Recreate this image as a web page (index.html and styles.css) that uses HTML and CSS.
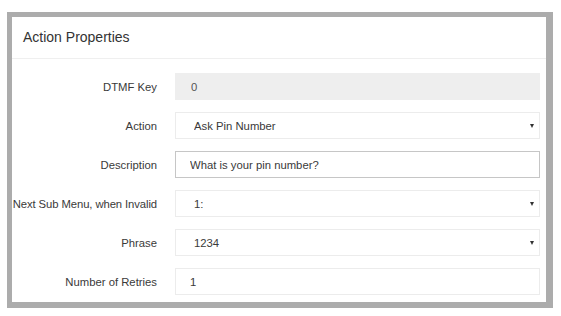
FILE: index.html
```html
<!DOCTYPE html>
<html lang="en">
<head>
    <meta charset="UTF-8">
    <meta name="viewport" content="width=device-width, initial-scale=1.0">
    <title>Action Properties</title>
    <link rel="stylesheet" href="styles.css">
</head>
<body>

<div class="panel">
    <div class="panel-heading">Action Properties</div>

    <form class="panel-body">
        <label for="dtmf-key">DTMF Key</label>
        <input type="text" id="dtmf-key" class="field field-disabled" value="0" disabled>

        <label for="action">Action</label>
        <span class="select-wrap">
            <select id="action" class="field">
                <option>Ask Pin Number</option>
                <option>Play Message</option>
                <option>Transfer</option>
            </select>
        </span>

        <label for="description">Description</label>
        <input type="text" id="description" class="field field-focus" value="What is your pin number?">

        <label for="next-sub" class="label-long">Next Sub Menu, when Invalid</label>
        <span class="select-wrap">
            <select id="next-sub" class="field">
                <option>1:</option>
                <option>2:</option>
            </select>
        </span>

        <label for="phrase">Phrase</label>
        <span class="select-wrap">
            <select id="phrase" class="field">
                <option>1234</option>
            </select>
        </span>

        <label for="retries">Number of Retries</label>
        <input type="text" id="retries" class="field" value="1">
    </form>
</div>

</body>
</html>
```

FILE: styles.css
```css
body {
    font-family: 'Liberation Sans', Arial, sans-serif;
    background-color: #ffffff;
    color: #333333;
    margin: 0;
}
.panel {
    margin: 12px 0 0 7px;
    width: 534px;
    background-color: #ffffff;
    border-style: solid;
    border-color: #acacac;
    border-width: 5px 7px 6px 5px;
}
.panel-heading {
    height: 42px;
    box-sizing: border-box;
    padding: 0 11px;
    line-height: 41px;
    font-size: 14px;
    color: #333333;
    border-bottom: 1px solid #efefef;
}
.panel-body {
    display: grid;
    grid-template-columns: 145px 365px;
    grid-auto-rows: 27px;
    column-gap: 18px;
    row-gap: 12px;
    padding: 14px 6px 7px 0;
    margin: 0;
}
label {
    align-self: center;
    text-align: right;
    font-size: 11.3px;
    color: #3a3a3a;
    white-space: nowrap;
}
.label-long {
    letter-spacing: -0.1px;
}
.field {
    width: 100%;
    height: 27px;
    box-sizing: border-box;
    margin: 0;
    padding: 0 14px;
    border: 1px solid #ececec;
    border-radius: 0;
    background-color: #ffffff;
    font-family: inherit;
    font-size: 11.3px;
    color: #3a3a3a;
    outline: none;
}
.field-disabled {
    background-color: #eeeeee;
    border-color: #eeeeee;
    -webkit-text-fill-color: #555555;
    padding-left: 15px;
}
.field-focus {
    border-color: #c6c6c6;
}
.select-wrap {
    position: relative;
    display: block;
}
.select-wrap select {
    appearance: none;
    -webkit-appearance: none;
    padding-left: 18px;
}
.select-wrap::after {
    content: "";
    position: absolute;
    right: 6px;
    top: 12px;
    border-left: 2.5px solid transparent;
    border-right: 2.5px solid transparent;
    border-top: 4px solid #333333;
    pointer-events: none;
}
```
